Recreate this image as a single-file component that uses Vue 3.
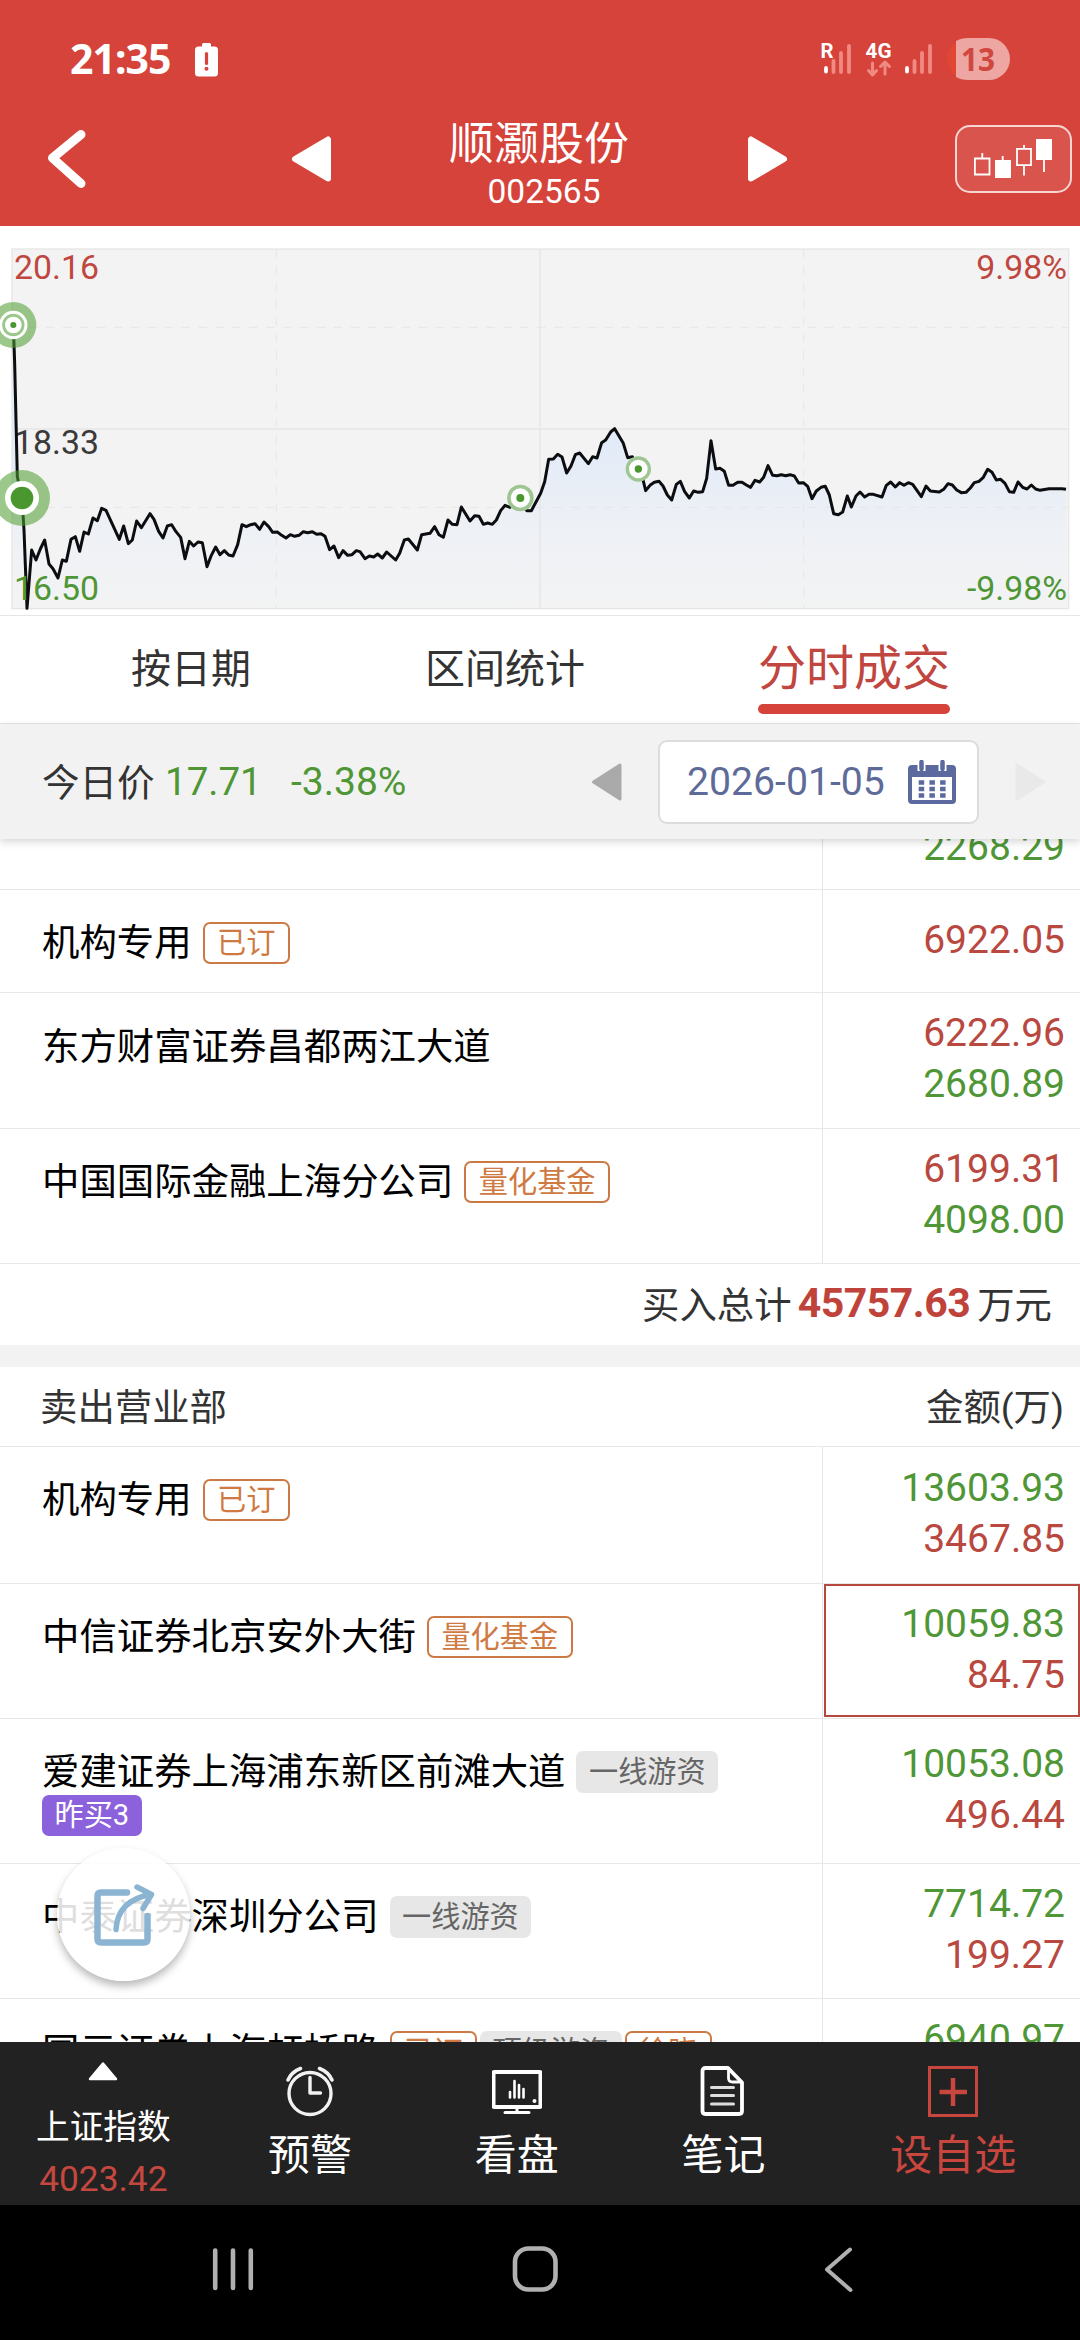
<script setup>
// Price line, in thirds of a pixel from the top left corner of the chart
const series = [
  [40, 285], [44, 400], [52, 740], [66, 804], [72, 900], [81, 1135], [95, 960], [108, 990], [121, 957], [134, 930],
  [147, 1002], [159, 1016], [174, 1044], [187, 990], [199, 994], [213, 928], [226, 920], [239, 964], [252, 906], [265, 912],
  [279, 864], [292, 872], [305, 835], [318, 841], [358, 928], [371, 888], [385, 941], [397, 930], [410, 873], [424, 893],
  [450, 851], [462, 868], [476, 904], [489, 924], [502, 888], [515, 884], [528, 905], [542, 922], [555, 986], [568, 934],
  [581, 948], [594, 936], [607, 938], [621, 1010], [634, 976], [647, 951], [660, 974], [673, 962], [686, 975], [699, 978],
  [713, 944], [726, 884], [739, 890], [752, 884], [765, 881], [779, 898], [792, 876], [806, 890], [818, 907], [832, 906],
  [845, 916], [858, 924], [871, 914], [884, 919], [897, 916], [910, 905], [923, 908], [937, 905], [950, 913], [963, 911],
  [975, 919], [989, 959], [1002, 948], [1016, 983], [1029, 962], [1043, 976], [1056, 974], [1069, 962], [1080, 965], [1095, 986],
  [1108, 978], [1121, 981], [1133, 972], [1147, 984], [1160, 966], [1187, 990], [1199, 970], [1213, 930], [1225, 927], [1252, 960],
  [1265, 914], [1290, 910], [1304, 890], [1317, 914], [1330, 922], [1344, 870], [1357, 883], [1371, 884], [1384, 831], [1410, 873],
  [1424, 857], [1437, 859], [1450, 883], [1463, 879], [1477, 883], [1489, 870], [1502, 842], [1515, 826], [1530, 832], [1561, 804],
  [1580, 842], [1594, 842], [1622, 790], [1634, 755], [1646, 688], [1660, 687], [1673, 673], [1686, 681], [1700, 729], [1713, 708],
  [1726, 674], [1739, 669], [1765, 701], [1778, 680], [1791, 684], [1805, 638], [1817, 630], [1832, 606], [1844, 596], [1870, 640],
  [1883, 683], [1897, 680], [1915, 717], [1928, 745], [1937, 782], [1950, 766], [1963, 757], [1977, 754], [1989, 768], [2002, 795],
  [2015, 810], [2029, 763], [2041, 754], [2054, 785], [2068, 804], [2081, 783], [2095, 787], [2108, 785], [2120, 745], [2133, 632],
  [2147, 717], [2160, 715], [2173, 724], [2186, 766], [2199, 766], [2213, 757], [2226, 757], [2239, 765], [2252, 772], [2265, 751],
  [2279, 756], [2291, 742], [2304, 707], [2318, 736], [2331, 737], [2344, 734], [2357, 737], [2370, 734], [2383, 738], [2396, 759],
  [2410, 758], [2423, 769], [2436, 806], [2449, 783], [2463, 772], [2476, 769], [2488, 795], [2501, 851], [2515, 854], [2528, 846],
  [2542, 798], [2554, 831], [2568, 798], [2580, 786], [2594, 801], [2607, 793], [2620, 793], [2646, 801], [2659, 766], [2672, 756],
  [2686, 771], [2699, 758], [2712, 766], [2725, 758], [2738, 763], [2764, 800], [2778, 768], [2791, 783], [2818, 786], [2831, 778],
  [2844, 761], [2857, 765], [2870, 780], [2884, 788], [2898, 787], [2911, 774], [2923, 758], [2937, 754], [2950, 742], [2963, 718],
  [2976, 727], [2989, 750], [3002, 748], [3015, 760], [3028, 785], [3041, 787], [3054, 756], [3068, 772], [3081, 777], [3094, 765],
  [3107, 777], [3120, 781], [3147, 776], [3186, 776], [3198, 778],
]
const linePoints = series.map((p) => p.join(',')).join(' ')
const areaPoints = `36,1136 ${linePoints} 3198,1136`

const buyRows = [
  { name: '', tags: [], values: [['2268.29', 'green']], kind: 'clipped' },
  { name: '机构专用', tags: [['已订', 'outline']], values: [['6922.05', 'red']], kind: 'short' },
  { name: '东方财富证券昌都两江大道', tags: [], values: [['6222.96', 'red'], ['2680.89', 'green']], kind: 'roomy' },
  { name: '中国国际金融上海分公司', tags: [['量化基金', 'outline']], values: [['6199.31', 'red'], ['4098.00', 'green']], kind: 'normal' },
]
const sellRows = [
  { name: '机构专用', tags: [['已订', 'outline']], values: [['13603.93', 'green'], ['3467.85', 'red']], kind: 'first' },
  { name: '中信证券北京安外大街', tags: [['量化基金', 'outline']], values: [['10059.83', 'green'], ['84.75', 'red']], kind: 'picked' },
  { name: '爱建证券上海浦东新区前滩大道', tags: [['一线游资', 'grey']], extra: '昨买3', values: [['10053.08', 'green'], ['496.44', 'red']], kind: 'tall' },
  { name: '中泰证券深圳分公司', tags: [['一线游资', 'grey']], values: [['7714.72', 'green'], ['199.27', 'red']], kind: 'normal' },
  { name: '国元证券上海虹桥路', tags: [['已订', 'outline'], ['顶级游资', 'grey'], ['徐晓', 'outline']], values: [['6940.97', 'green']], kind: 'normal' },
]
</script>

<template>
  <div class="screen">
    <header class="header">
      <div class="status">
        <span class="clock">21:35</span>
        <svg class="alert" width="23" height="34" viewBox="0 0 23 34">
          <path fill="#fff" d="M7 3.5V1.5Q7 0 8.500 0h6Q16 0 16 1.500v2h3.500q3.500 0 3.500 3.500v23q0 3.500-3.500 3.500h-16Q0 33.500 0 30V7q0-3.500 3.500-3.500z" />
          <path d="M11.500 10.500v10" stroke="#d5433a" stroke-width="3.200" stroke-linecap="round" />
          <circle cx="11.500" cy="25.800" r="2" fill="#d5433a" />
        </svg>
        <svg class="signals" width="194" height="46" viewBox="818 36 194 46">
          <g stroke-width="3.800" stroke-linecap="round">
            <path stroke="#fff" d="M826 68v3.500M907 68v3.500" />
            <path stroke="#f08a82" d="M833.500 61v11M841 53v19M849 46v26M914.500 61v11M922 53v19M930 46v26" />
          </g>
          <text x="820.500" y="57.500" class="net" textLength="13" lengthAdjust="spacingAndGlyphs">R</text>
          <text x="865.500" y="57.500" class="net" textLength="26" lengthAdjust="spacingAndGlyphs">4G</text>
          <path fill="none" stroke="#f08a82" stroke-width="3" stroke-linecap="round" stroke-linejoin="round" d="M872.500 63v12M868.500 70.500l4 4.500 4-4.500M885 74v-12M880.500 66.500l4.500-4.500 4.500 4.500" />
          <path fill="#e14534" d="M956 41.500a21 21 0 0 0 0 35z" />
          <path fill="#eda6a1" d="M956 41q5-3 12-3h21a21 21 0 0 1 0 42h-21q-7 0-12-3z" />
          <text x="961" y="71" class="level" textLength="34" lengthAdjust="spacingAndGlyphs">13</text>
        </svg>
      </div>
      <div class="titlebar">
        <svg class="back" width="40" height="60" viewBox="0 0 40 60" fill="none" stroke="#fff" stroke-width="9" stroke-linecap="round" stroke-linejoin="round"><path d="M34 6.500 5.500 30 34 55.500" /></svg>
        <svg class="prev" width="42" height="48" viewBox="0 0 42 48"><path d="M4 24 37 4.500v39z" fill="#fff" stroke="#fff" stroke-width="6" stroke-linejoin="round" /></svg>
        <div class="stock">
          <span class="stock-name">顺灏股份</span>
          <span class="stock-code">002565</span>
        </div>
        <svg class="next" width="42" height="48" viewBox="0 0 42 48"><path d="M38 24 5 4.500v39z" fill="#fff" stroke="#fff" stroke-width="6" stroke-linejoin="round" /></svg>
        <div class="kline">
          <svg width="80" height="38" viewBox="973 137 80 38" fill="none" stroke="#fff" stroke-width="1.800">
            <path d="M974.900 158.500h14.600v16h-14.600zM982.300 153v5M1017 148.900h14v16.200h-14zM1024 145v4M1024 165v10.500M1002.700 156v6M1044 158v14" />
            <path fill="#fff" stroke="none" d="M995 160h16v18h-16zM1036 139h16v21h-16z" />
          </svg>
        </div>
      </div>
    </header>

    <svg class="chart" viewBox="0 -12 3240 1167" width="1080" height="389">
      <defs>
        <linearGradient id="areaFill" x1="0" y1="596" x2="0" y2="1136" gradientUnits="userSpaceOnUse">
          <stop offset="0" stop-color="#d9e6fa" stop-opacity=".75" />
          <stop offset="1" stop-color="#eef2f8" stop-opacity=".1" />
        </linearGradient>
      </defs>
      <rect x="36" y="57" width="3170" height="1079" fill="#f3f3f3" />
      <polygon :points="areaPoints" fill="url(#areaFill)" />
      <g fill="none" stroke="#e6e6e6" stroke-width="4">
        <path d="M36 597H3206M1620 57V1136" />
        <path stroke-width="3" stroke-dasharray="26 24.800" d="M36 292H3206M36 832H3206M829 57V1136M2411 57V1136" />
        <rect x="36" y="57" width="3170" height="1079" />
      </g>
      <g class="axis">
        <text x="42" y="146" fill="#c0473f">20.16</text>
        <text x="42" y="671" fill="#3a3a3a">18.33</text>
        <text x="3201" y="146" fill="#c0473f" text-anchor="end">9.98%</text>
        <text x="3201" y="1109" fill="#4f9636" text-anchor="end">-9.98%</text>
      </g>
      <polyline :points="linePoints" fill="none" stroke="#0b0d10" stroke-width="9" stroke-linejoin="round" />
      <text class="axis" x="42" y="1109" fill="#4f9636">16.50</text>
      <circle cx="40" cy="285" r="69" fill="#4f9e30" fill-opacity=".56" />
      <circle cx="40" cy="285" r="38" fill="#9bc78c" stroke="#fff" stroke-width="9" />
      <circle cx="40" cy="285" r="25" fill="#fff" />
      <circle cx="40" cy="285" r="9" fill="#4a962f" />
      <circle cx="66" cy="804" r="84" fill="#4f9e30" fill-opacity=".56" />
      <circle cx="66" cy="804" r="51" fill="#fff" />
      <circle cx="66" cy="804" r="34" fill="#4a962f" />
      <circle cx="1561" cy="804" r="40" fill="#9fc592" />
      <circle cx="1561" cy="804" r="29" fill="#fff" />
      <circle cx="1561" cy="804" r="12" fill="#4a962f" />
      <circle cx="1915" cy="717" r="38" fill="#9fc592" />
      <circle cx="1915" cy="717" r="28" fill="#fff" />
      <circle cx="1915" cy="717" r="11" fill="#4a962f" />
    </svg>

    <nav class="tabs">
      <span class="tab tab-date">按日期</span>
      <span class="tab tab-range">区间统计</span>
      <span class="tab active">分时成交</span>
    </nav>

    <div class="filter">
      <span class="today">今日价</span>
      <span class="price">17.71</span>
      <span class="change">-3.38%</span>
      <svg class="day-prev" width="30" height="38" viewBox="0 0 30 38"><path d="M1.500 19 28 2v34z" fill="#aaa" stroke="#aaa" stroke-width="3" stroke-linejoin="round" /></svg>
      <div class="datebox">
        <span>2026-01-05</span>
        <svg width="48" height="44" viewBox="0 0 48 44">
          <path fill="#5b699e" d="M4 5h40q4 0 4 4v31q0 4-4 4H4q-4 0-4-4V9q0-4 4-4zM4 17v23h40V17z" fill-rule="evenodd" />
          <path stroke="#fff" stroke-width="8" d="M13.500 3v8M34.500 3v8" />
          <path stroke="#5b699e" stroke-width="4.500" stroke-linecap="round" d="M13.500 2v7M34.500 2v7" />
          <path stroke="#5b699e" stroke-width="4.500" stroke-dasharray="5.500 5.200" d="M10.700 22.500h28M10.700 29h28M10.700 35.500h28" />
        </svg>
      </div>
      <svg class="day-next" width="30" height="38" viewBox="0 0 30 38"><path d="M28.500 19 2 2v34z" fill="#e9e9e9" stroke="#e9e9e9" stroke-width="3" stroke-linejoin="round" /></svg>
    </div>

    <main class="list">
      <div v-for="(row, i) in buyRows" :key="'b' + i" class="row" :class="row.kind">
        <div class="seat">
          <div class="seat-line">
            <span class="seat-name">{{ row.name }}</span>
            <span v-for="t in row.tags" :key="t[0]" class="tag" :class="t[1]">{{ t[0] }}</span>
          </div>
        </div>
        <div class="amounts">
          <span v-for="v in row.values" :key="v[0]" :class="v[1]">{{ v[0] }}</span>
        </div>
      </div>
      <div class="total">买入总计<b>45757.63</b>万元</div>
      <div class="band"></div>
      <div class="caption"><span>卖出营业部</span><span>金额(万)</span></div>
      <div v-for="(row, i) in sellRows" :key="'s' + i" class="row" :class="row.kind">
        <div class="seat">
          <div class="seat-line">
            <span class="seat-name">{{ row.name }}</span>
            <span v-for="t in row.tags" :key="t[0]" class="tag" :class="t[1]">{{ t[0] }}</span>
          </div>
          <span v-if="row.extra" class="tag purple">{{ row.extra }}</span>
        </div>
        <div class="amounts">
          <span v-for="v in row.values" :key="v[0]" :class="v[1]">{{ v[0] }}</span>
        </div>
      </div>
      <div class="share">
        <svg width="66" height="66" viewBox="90 1882 66 66" fill="none" stroke="#8ab4d2" stroke-width="6.500" stroke-linecap="round" stroke-linejoin="round">
          <path d="M126 1892.500H100q-3.500 0-3.500 3.500v43q0 3.500 3.500 3.500h43q3.500 0 3.500-3.500v-23" />
          <path stroke-width="5.500" d="M115 1929.500q1.500-29 34.500-35M136 1887l14.500 7.500-8.500 14" />
        </svg>
      </div>
    </main>

    <footer class="bottom">
      <div class="item index">
        <svg width="30" height="19" viewBox="0 0 30 19"><path d="M15 1.500 28 17H2z" fill="#fff" stroke="#fff" stroke-width="2.500" stroke-linejoin="round" /></svg>
        <span class="index-name">上证指数</span>
        <span class="index-value">4023.42</span>
      </div>
      <div class="item">
        <svg width="50" height="52" viewBox="0 0 50 52" fill="none" stroke="#f2f2f2" stroke-width="3.400" stroke-linecap="round">
          <circle cx="25" cy="28.500" r="21" />
          <path d="M25 12.500v15.500h10.500" stroke-linejoin="round" />
          <path d="M3 15Q6.500 7 15.500 3.500M47 15Q43.500 7 34.500 3.500" stroke-width="3.600" />
        </svg>
        <span>预警</span>
      </div>
      <div class="item">
        <svg width="50" height="52" viewBox="0 0 50 52" fill="none" stroke="#fff">
          <rect x="1.500" y="7" width="47" height="35" rx="1" stroke-width="4" />
          <path stroke-width="3" stroke-linecap="round" d="M13 47.500h24M25 43v3" />
          <path stroke-width="2.600" stroke-linecap="round" d="M18 27v5.500M22.500 16v16.500M27 20v12.500M31.500 24v8.500" />
          <circle cx="42.500" cy="36" r="2" fill="#fff" stroke="none" />
        </svg>
        <span>看盘</span>
      </div>
      <div class="item">
        <svg width="50" height="52" viewBox="0 0 50 52" fill="none" stroke="#fff" stroke-linejoin="round" stroke-linecap="round">
          <path stroke-width="3.800" d="M7.500 3H30l14 14.500V46q0 3-3 3H7.500q-3 0-3-3V6q0-3 3-3z" />
          <path stroke-width="2.800" d="M30.500 4v9q0 4 4 4h9" />
          <path stroke-width="3" stroke="#ddd" d="M13.500 22.500h22M13.500 30.500h22M13.500 39h22" />
        </svg>
        <span>笔记</span>
      </div>
      <div class="item last">
        <svg width="50" height="52" viewBox="0 0 50 52" fill="none" stroke="#c9463f">
          <rect x="1.500" y="2.500" width="47" height="48" stroke-width="3" />
          <path stroke-width="4.500" d="M25 13v28M11.500 27h27.500" />
        </svg>
        <span>设自选</span>
      </div>
    </footer>

    <div class="sysnav">
      <svg width="1080" height="135" viewBox="0 0 1080 135" fill="none" stroke="#b0b0b0" stroke-width="4.600" stroke-linecap="round" stroke-linejoin="round">
        <path d="M215.200 45.500v37.500M233 45.500v37.500M250.800 45.500v37.500" />
        <rect x="515" y="43.500" width="40.500" height="41" rx="13.500" />
        <path d="M850 44.500 827 64.500 850.500 85" stroke-width="4" />
      </svg>
    </div>
  </div>
</template>

<style>
body { background: #000; }
</style>

<style scoped>
.screen {
  width: 1080px;
  height: 2340px;
  overflow: hidden;
  display: flex;
  flex-direction: column;
  background: #fff;
  font-family: Roboto, "Noto Sans CJK SC", sans-serif;
}
svg { display: block; flex: none; }

.header { height: 226px; flex: none; background: #d5433a; color: #fff; }
.status { height: 106px; display: flex; align-items: flex-start; padding-top: 36px; padding-left: 70px; box-sizing: border-box; }
.clock { width: 125px; font: 700 41px/45px "Noto Sans", sans-serif; letter-spacing: -1px; white-space: nowrap; }
.alert { margin-top: 7px; }
.signals { margin-left: 600px; }
.net { font: 700 20px Roboto, sans-serif; fill: #fff; }
.level { font: 700 33px "Noto Sans", sans-serif; fill: #d0473f; }
.titlebar { display: flex; align-items: flex-start; height: 120px; }
.back { margin: 22px 0 0 47px; }
.prev { margin: 29px 0 0 204px; }
.stock { flex: none; margin-left: 96px; width: 232px; margin-top: 12px; display: flex; flex-direction: column; align-items: center; }
.stock-name { font-size: 45px; line-height: 54px; margin-right: 12px; }
.stock-code { font-size: 33.500px; line-height: 40px; margin: 0 0 0 -2px; }
.next { margin: 29px 0 0 85px; }
.kline {
  margin: 19px 0 0 167px;
  width: 117px;
  height: 68px;
  flex: none;
  box-sizing: border-box;
  border: 2px solid #f7d5d3;
  border-radius: 15px;
  background: #d9544d;
  display: flex;
  align-items: flex-start;
  padding: 10px 0 0 16px;
}
.kline svg { overflow: visible; }

.axis { font-family: Roboto, sans-serif; font-size: 101.500px; }

.tabs {
  flex: none;
  height: 109px;
  box-sizing: border-box;
  border-top: 1px solid #e6e6e6;
  border-bottom: 1px solid #e6e6e6;
  display: flex;
  align-items: flex-start;
}
.tab { font-size: 40px; line-height: 60px; margin-top: 24px; color: #333; white-space: nowrap; }
.tab-date { margin-left: 131px; width: 294px; }
.tab-range { width: 333px; }
.active { position: relative; width: 192px; font-size: 48px; line-height: 58px; color: #c0463f; }
.active::after { content: ""; position: absolute; left: 0; right: 0; top: 64px; height: 9.500px; border-radius: 5px; background: #d5433a; }

.filter {
  flex: none;
  position: relative;
  z-index: 2;
  height: 115px;
  background: #f2f2f2;
  box-shadow: 0 3px 8px rgba(0, 0, 0, .16);
  display: flex;
  align-items: center;
  padding-left: 42px;
  font-size: 37.500px;
  color: #333;
  white-space: nowrap;
}
.today { width: 123px; margin-top: -5px; }
.price { width: 126px; font-size: 38.500px; color: #4f9636; }
.change { width: 301px; font-size: 39px; color: #4f9636; }
.datebox {
  margin: 1px 36px 0 36px;
  width: 321px;
  height: 84px;
  box-sizing: border-box;
  border: 2px solid #dcdcdc;
  border-radius: 9px;
  background: #fff;
  display: flex;
  align-items: center;
  justify-content: space-between;
  padding: 0 21px 0 27px;
  font-size: 39.200px;
  color: #5e6b99;
}

.list { flex: none; position: relative; height: 1203px; overflow: hidden; }
.row { display: flex; box-sizing: border-box; border-bottom: 1px solid #e8e8e8; height: 135px; }
.seat { width: 823px; flex: none; box-sizing: border-box; border-right: 1px solid #e6e6e6; padding: 32px 0 0 42px; }
.seat-line { display: flex; align-items: center; height: 42px; }
.seat-name { font-size: 37.400px; line-height: 42px; color: #000; margin-right: 11px; white-space: nowrap; }
.tag { box-sizing: border-box; height: 42px; line-height: 42px; padding: 0 12.500px; border-radius: 7px; font-size: 29.200px; margin-right: 3px; white-space: nowrap; }
.outline { border: 2px solid #cc7a45; color: #cf7a42; line-height: 38px; }
.grey { background: #e7e7e7; color: #666; }
.purple { display: inline-block; background: #8c62dc; color: #fff; margin-top: 2px; height: 41px; line-height: 41px; }
.amounts { flex: 1; display: flex; flex-direction: column; align-items: flex-end; padding: 15px 15px 0 0; font-size: 39px; line-height: 50.500px; }
.red { color: #b9483f; }
.green { color: #4f9636; }
.clipped { height: 51px; }
.clipped .amounts { padding-top: 0; margin-top: -17px; }
.short { height: 103px; }
.short .amounts { padding-top: 25px; }
.roomy { height: 136px; }
.roomy .seat { padding-top: 33px; }
.first { height: 137px; }
.first .amounts { padding-top: 16px; }
.tall { height: 145px; }
.tall .amounts { padding-top: 20px; }
.picked .amounts { border: 2px solid #b5483f; padding: 13px 13px 0 0; margin: 0 0 1px 1px; }
.total { height: 81px; box-sizing: border-box; display: flex; align-items: center; justify-content: flex-end; padding: 0 28px 4px 0; font-size: 37.400px; color: #333; white-space: nowrap; }
.total b { font-size: 41px; color: #c0433b; letter-spacing: -.5px; margin: 0 7px 0 6px; }
.band { height: 22px; background: #f2f2f2; }
.caption { height: 80px; box-sizing: border-box; border-bottom: 1px solid #e8e8e8; display: flex; justify-content: space-between; align-items: center; padding: 0 16px 4px 40px; font-size: 37.400px; color: #333; }
.share {
  position: absolute;
  left: 57px;
  top: 1009px;
  width: 133px;
  height: 133px;
  border-radius: 50%;
  background: rgba(255, 255, 255, .87);
  box-shadow: 0 5px 9px rgba(0, 0, 0, .28);
  display: flex;
  align-items: center;
  justify-content: center;
}

.bottom { flex: none; height: 163px; background: #222; display: flex; color: #fff; }
.item { width: 206.700px; display: flex; flex-direction: column; align-items: center; padding-top: 23px; box-sizing: border-box; font-size: 42px; line-height: 50px; white-space: nowrap; }
.item span { margin-top: 14px; }
.last { width: 253px; color: #c9463f; }
.index { padding-top: 20px; }
.item .index-name { font-size: 33.700px; line-height: 40px; margin-top: 27px; }
.item .index-value { font-size: 35.300px; line-height: 42px; margin-top: 10px; color: #c4483f; }
.sysnav { flex: none; height: 135px; background: #000; }
</style>
